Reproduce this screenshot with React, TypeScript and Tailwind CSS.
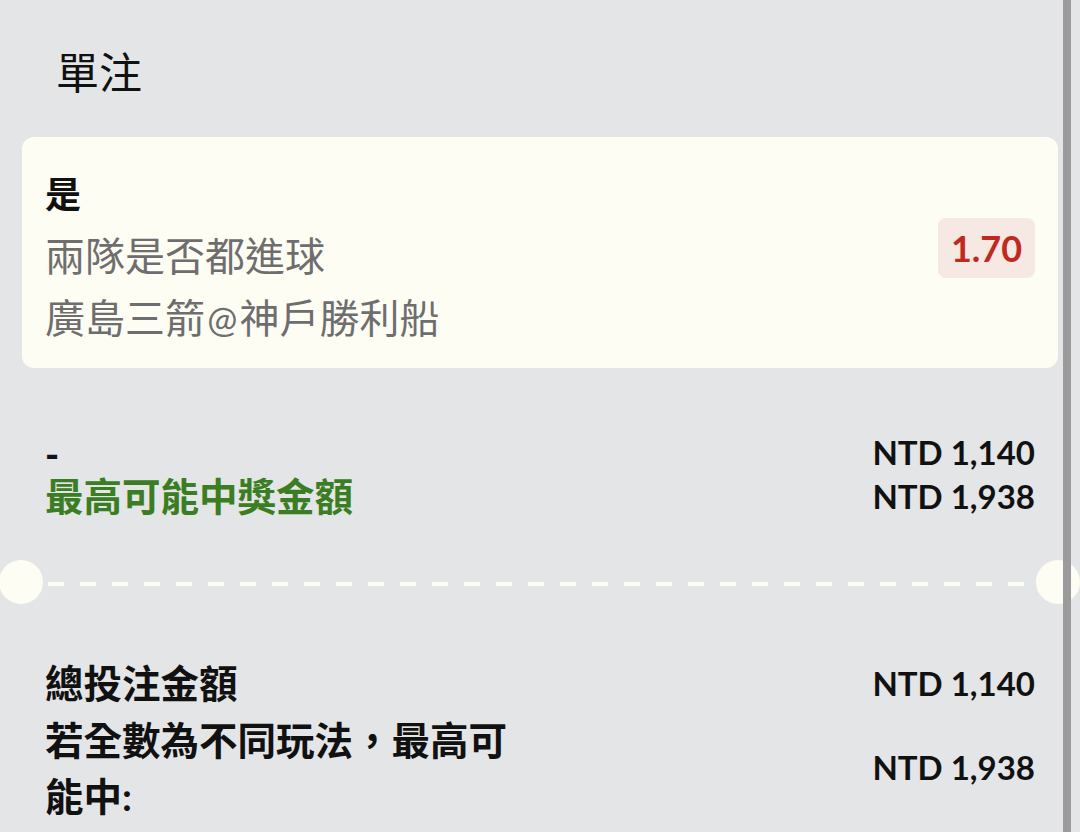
const font = "font-['Lato','Noto_Sans_CJK_TC',sans-serif]";

export default function App() {
  return (
    <div className={`relative w-[1080px] h-[832px] overflow-hidden bg-[#e4e5e7] text-[#111] ${font}`}>
      <div className="h-[137px] pl-[56px] pt-[45px] text-[43px] leading-[56px]">單注</div>

      {/* selection card */}
      <div className="mx-[22px] h-[231px] rounded-[12px] bg-[#fefdf4] pl-[23px] pr-[23px] flex justify-between">
        <div className="pt-[26px]">
          <div className="text-[36px] leading-[62px] font-bold">是</div>
          <div className="text-[40px] leading-[62px] text-[#6e6e6e]">兩隊是否都進球</div>
          <div className="text-[40px] leading-[62px] text-[#6e6e6e] [word-spacing:-8px]">
            廣島三箭 <span className="text-[36px]">@</span> 神戶勝利船
          </div>
        </div>
        <div className="mt-[81px] h-[60px] w-[97px] rounded-[8px] bg-[#f6e8e2] flex items-center justify-center text-[36px] font-bold text-[#c1281f]">
          1.70
        </div>
      </div>

      {/* stake + payout */}
      <div className="mt-[63px] px-[45px]">
        <div className="flex justify-between items-center h-[44px]">
          <span className="text-[38px] font-black">-</span>
          <span className="text-[33px] font-bold">NTD 1,140</span>
        </div>
        <div className="flex justify-between items-center h-[44px]">
          <span className="text-[38.5px] font-bold text-[#3b7d23]">最高可能中獎金額</span>
          <span className="text-[33px] font-bold">NTD 1,938</span>
        </div>
      </div>

      {/* ticket separator */}
      <div className="mt-[41px] flex items-center h-[44px]">
        <div className="ml-[-1px] w-[44px] h-[44px] rounded-full bg-[#fefdf4] shrink-0" />
        <div className="flex-1 ml-[5px] mr-[4px] mt-[3px] h-[4px] bg-[repeating-linear-gradient(90deg,#fefdf4_0_16px,transparent_16px_32px)]" />
        <div className="w-[44px] h-[44px] rounded-full bg-[#fefdf4] shrink-0" />
      </div>

      {/* totals */}
      <div className="mt-[52px] px-[45px]">
        <div className="flex justify-between items-center h-[56px]">
          <span className="text-[38.5px] font-bold">總投注金額</span>
          <span className="text-[33px] font-bold">NTD 1,140</span>
        </div>
        <div className="flex justify-between items-center">
          <div className="w-[480px] text-[38.5px] leading-[56px] font-bold">若全數為不同玩法，最高可能中:</div>
          <span className="text-[33px] font-bold">NTD 1,938</span>
        </div>
      </div>

      <div className="absolute top-0 right-[9px] w-[8px] h-full bg-[#9b9b9b]" />
    </div>
  );
}
